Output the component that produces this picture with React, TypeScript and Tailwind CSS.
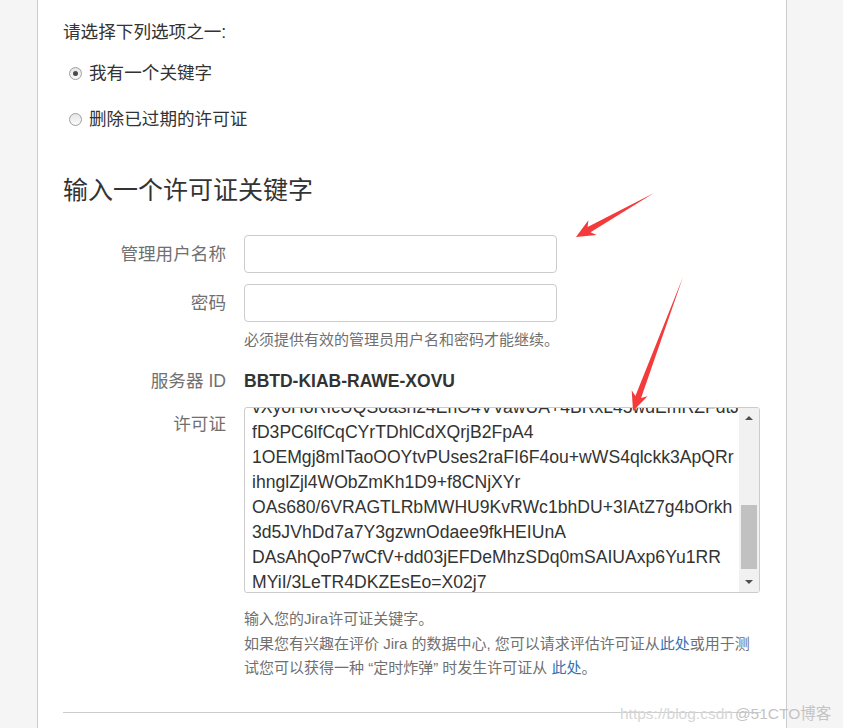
import React from "react";

const licenseLines = [
  "vXyoHoRIcUQS6ash24EhO4VVawUA+4BRxL45wdEmRZFdtJ",
  "fD3PC6lfCqCYrTDhlCdXQrjB2FpA4",
  "1OEMgj8mITaoOOYtvPUses2raFI6F4ou+wWS4qlckk3ApQRr",
  "ihnglZjl4WObZmKh1D9+f8CNjXYr",
  "OAs680/6VRAGTLRbMWHU9KvRWc1bhDU+3IAtZ7g4bOrkh",
  "3d5JVhDd7a7Y3gzwnOdaee9fkHEIUnA",
  "DAsAhQoP7wCfV+dd03jEFDeMhzSDq0mSAIUAxp6Yu1RR",
  "MYiI/3LeTR4DKZEsEo=X02j7",
];

// arrow polygon from tail (tx,ty) to tip (hx,hy)
function arrowPoints(tx: number, ty: number, hx: number, hy: number) {
  const dx = hx - tx;
  const dy = hy - ty;
  const len = Math.hypot(dx, dy);
  const ux = dx / len;
  const uy = dy / len;
  const nx = -uy;
  const ny = ux;
  const head = 19;
  const bx = hx - ux * head;
  const by = hy - uy * head;
  const cx = hx - ux * (head - 4);
  const cy = hy - uy * (head - 4);
  const p = (x: number, y: number) => `${x.toFixed(1)},${y.toFixed(1)}`;
  return [
    p(tx, ty),
    p(cx + nx * 3, cy + ny * 3),
    p(bx + nx * 8.5, by + ny * 8.5),
    p(hx, hy),
    p(bx - nx * 8.5, by - ny * 8.5),
    p(cx - nx * 3, cy - ny * 3),
  ].join(" ");
}

function Radio({ checked, label }: { checked?: boolean; label: string }) {
  return (
    <label className="flex items-center h-[24px] ml-[6px] gap-[7px] text-[17.6px] text-[#333]">
      <span className="w-[13px] h-[13px] rounded-full border border-[#9e9e9e] bg-gradient-to-b from-[#e6e6e6] to-[#fafafa] flex items-center justify-center">
        {checked && <span className="w-[5px] h-[5px] rounded-full bg-[#4a4a4a]" />}
      </span>
      {label}
    </label>
  );
}

function Field({ label, children, top }: { label: string; children: React.ReactNode; top?: boolean }) {
  return (
    <div className={`flex ${top ? "items-start" : "items-center"} gap-[18px]`}>
      <div className={`w-[163px] shrink-0 text-right text-[17.6px] leading-[24px] text-[#707070] ${top ? "pt-[5px]" : ""}`}>
        {label}
      </div>
      {children}
    </div>
  );
}

export default function App() {
  return (
    <div
      className="relative h-[728px] overflow-hidden bg-[#f5f5f5] flex"
      style={{ fontFamily: '"Liberation Sans", Arial, "Noto Sans CJK SC", sans-serif' }}
    >
      <div className="w-[37px] shrink-0" />
      <div className="w-[750px] shrink-0 bg-white border-x border-[#cccccc] pl-[25px] pr-[25px] pt-[20px]">
        <p className="text-[17.6px] leading-[24px] text-[#333]">请选择下列选项之一:</p>
        <div className="mt-[17px]">
          <Radio checked label="我有一个关键字" />
        </div>
        <div className="mt-[22px]">
          <Radio label="删除已过期的许可证" />
        </div>

        <h2 className="mt-[42px] text-[25px] leading-[34px] text-[#333]">输入一个许可证关键字</h2>

        <div className="mt-[28px]">
          <Field label="管理用户名称">
            <input className="w-[313px] h-[38px] border border-[#cccccc] rounded-[4px] outline-none px-2" />
          </Field>
        </div>
        <div className="mt-[11px]">
          <Field label="密码">
            <input type="password" className="w-[313px] h-[38px] border border-[#cccccc] rounded-[4px] outline-none px-2" />
          </Field>
        </div>
        <p className="mt-[7px] ml-[181px] text-[15px] leading-[22px] text-[#707070]">必须提供有效的管理员用户名和密码才能继续。</p>

        <div className="mt-[18px]">
          <Field label="服务器 ID">
            <span className="text-[17.5px] leading-[24px] font-bold text-[#333]">BBTD-KIAB-RAWE-XOVU</span>
          </Field>
        </div>

        <div className="mt-[14px]">
          <Field label="许可证" top>
            <div className="w-[516px] h-[186px] border border-[#cccccc] rounded-[3px] flex overflow-hidden">
              <div className="flex-1 overflow-hidden pl-[7px]">
                <div className="-mt-[13.5px] text-[17.6px] leading-[25px] text-[#333] whitespace-pre">
                  {licenseLines.map((l, i) => (
                    <div key={i}>{l}</div>
                  ))}
                </div>
              </div>
              <div className="w-[20px] shrink-0 bg-[#f1f1f1] flex flex-col">
                <div className="h-[20px] flex items-center justify-center">
                  <span className="w-0 h-0 border-x-[4px] border-x-transparent border-b-[4px] border-b-[#505050]" />
                </div>
                <div className="h-[77px]" />
                <div className="h-[64px] mx-[2px] bg-[#c1c1c1]" />
                <div className="flex-1" />
                <div className="h-[20px] flex items-center justify-center">
                  <span className="w-0 h-0 border-x-[4px] border-x-transparent border-t-[4px] border-t-[#505050]" />
                </div>
              </div>
            </div>
          </Field>
        </div>

        <div className="mt-[14px] ml-[181px] text-[15px] leading-[24.5px] text-[#707070]">
          <p>输入您的Jira许可证关键字。</p>
          <p>
            如果您有兴趣在评价 Jira 的数据中心, 您可以请求评估许可证从<a className="text-[#3572b0]">此处</a>或用于测
          </p>
          <p>
            试您可以获得一种 “定时炸弹” 时发生许可证从 <a className="text-[#3572b0]">此处</a>。
          </p>
        </div>

        <div className="mt-[31px] border-t border-[#cccccc]" />
      </div>

      <svg className="absolute left-0 top-0 pointer-events-none" width="843" height="728">
        <polygon points={arrowPoints(654, 193, 576, 237)} fill="#f43a3a" />
        <polygon points={arrowPoints(683, 277, 633, 411)} fill="#f43a3a" />
      </svg>

      <div className="absolute left-[620px] top-[702px] flex items-baseline pointer-events-none whitespace-nowrap">
        <span className="text-[15.5px] text-[#d6d6d6]">https://blog.csdn</span>
        <span className="ml-[2px] text-[15.5px] text-[#c4c4c4]">@51CTO博客</span>
      </div>
    </div>
  );
}
